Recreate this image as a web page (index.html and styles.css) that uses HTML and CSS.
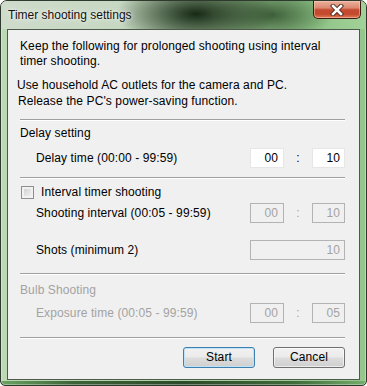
FILE: index.html
```html
<!DOCTYPE html>
<html>
	<head>
		<title>Timer shooting settings</title>
		<meta charset="UTF-8">
		<link rel="stylesheet" href="styles.css">
	</head>
	<body>
		<div class="window">
			<div class="titlebar">
				<span class="title">Timer shooting settings</span>
				<div class="closeBtn">
					<svg width="14" height="12" viewBox="0 0 14 12">
						<path d="M3 2 L11 10 M11 2 L3 10" stroke="#4a2418" stroke-width="4.4" stroke-linecap="square" fill="none"/>
						<path d="M3 2 L11 10 M11 2 L3 10" stroke="#ffffff" stroke-width="2.6" stroke-linecap="square" fill="none"/>
					</svg>
				</div>
			</div>
			<div class="client">
				<div class="note">Keep the following for prolonged shooting using interval<br>timer shooting.</div>
				<div class="note2">
					<div class="l1">Use household AC outlets for the camera and PC.</div>
					<div class="l2">Release the PC's power-saving function.</div>
				</div>
				<div class="sep sep1"></div>
				<div class="group groupDelay">Delay setting</div>
				<div class="row rowDelay">
					<span class="label">Delay time (00:00 - 99:59)</span>
					<div class="time">
						<div class="box boxMin">00</div><span class="colon">:</span><div class="box boxSec">10</div>
					</div>
				</div>
				<div class="sep sep2"></div>
				<div class="checkRow">
					<span class="checkbox"></span>
					<span>Interval timer shooting</span>
				</div>
				<div class="row rowInterval">
					<span class="label">Shooting interval (00:05 - 99:59)</span>
					<div class="time off">
						<div class="box boxMin">00</div><span class="colon">:</span><div class="box boxSec">10</div>
					</div>
				</div>
				<div class="row rowShots">
					<span class="label">Shots (minimum 2)</span>
					<div class="box boxWide off">10</div>
				</div>
				<div class="sep sep3"></div>
				<div class="group groupBulb disabled">Bulb Shooting</div>
				<div class="row rowExposure disabled">
					<span class="label">Exposure time (00:05 - 99:59)</span>
					<div class="time off">
						<div class="box boxMin">00</div><span class="colon">:</span><div class="box boxSec">05</div>
					</div>
				</div>
				<div class="sep sep4"></div>
				<div class="buttons">
					<div class="button buttonDefault">Start</div>
					<div class="button">Cancel</div>
				</div>
			</div>
		</div>
	</body>
</html>
```

FILE: styles.css
```css
body{
	margin: 0;
	font-family: "Liberation Sans", Arial, sans-serif;
	font-size: 12px;
	letter-spacing: 0.1px;
	color: #000;
	background-color: #ffffff;
}
.window{
	width: 367px;
	height: 386px;
	box-sizing: border-box;
	border: 1px solid #2e3a2d;
	border-radius: 7px 7px 5px 5px;
	padding: 0 6px 6px 6px;
	background:
		linear-gradient(to right, #6aa463 0%, #3c6338 20%, #2c4a29 50%, #3f6a3a 80%, #73ad6b 100%) bottom / 100% 4px no-repeat,
		linear-gradient(to right, #bcd8b5 0%, #b2d4ab 40%, #a0cc98 75%, #95c68c 100%);
	box-shadow: inset 0 0 0 1px rgba(255,255,255,0.35);
	overflow: hidden;
}
.titlebar{
	display: flex;
	justify-content: space-between;
	height: 28px;
	margin: 0 -6px;
	padding-left: 7px;
	background:
		radial-gradient(ellipse 80px 32px at 195px 13px, rgba(16,34,14,0.95), rgba(16,34,14,0)),
		radial-gradient(ellipse 60px 26px at 272px 14px, rgba(36,66,32,0.75), rgba(36,66,32,0)),
		linear-gradient(to right, #cfdbcb 0%, #c6d7c2 32%, #94b58d 60%, #8ec386 85%, #a2d199 100%);
}
.title{
	margin-top: 6px;
	line-height: 16px;
	letter-spacing: 0;
	color: #111;
	text-shadow: 0 0 6px rgba(255,255,255,0.9), 0 0 3px rgba(255,255,255,0.7);
}
.closeBtn{
	width: 46px;
	height: 17px;
	margin-right: 5px;
	border: 1px solid #3b1b12;
	border-top: none;
	border-radius: 0 0 5px 5px;
	background: linear-gradient(#eab09c 0%, #dc8a72 40%, #c54a30 52%, #c44a2e 78%, #e27d58 100%);
	box-shadow: inset 0 0 0 1px rgba(255,215,200,0.45);
	display: flex;
	align-items: center;
	justify-content: center;
}
.client{
	height: 351px;
	box-sizing: border-box;
	border: 1px solid #4b5a49;
	background-color: #f0f0f0;
	padding: 9px 14px 0 12px;
}
.note{
	line-height: 15px;
}
.note2{
	margin-top: 8px;
	line-height: 16px;
}
.note2 .l1{
	margin-left: -3px;
}
.note2 .l2{
	margin-left: -2px;
}
.sep{
	height: 0;
	border-top: 1px solid #a0a0a0;
	border-bottom: 1px solid #ffffff;
}
.sep1{ margin-top: 10px; }
.sep2{ margin-top: 9px; }
.sep3{ margin-top: 13px; }
.sep4{ margin-top: 14px; }
.group{
	line-height: 16px;
}
.groupDelay{ margin-top: 4px; }
.groupBulb{ margin-top: 7px; }
.disabled{
	color: #a3a3a3;
}
.row{
	display: flex;
	justify-content: space-between;
	align-items: center;
	height: 20px;
}
.row .label{
	padding-left: 16px;
}
.rowDelay{ margin-top: 7px; }
.rowInterval{ margin-top: 3px; }
.rowShots{ margin-top: 17px; }
.rowExposure{ margin-top: 5px; }
.checkRow{
	display: flex;
	align-items: center;
	height: 16px;
	margin-top: 5px;
	gap: 7px;
}
.checkbox{
	width: 11px;
	height: 11px;
	margin-left: 1px;
	border: 1px solid #8e8f8f;
	background: linear-gradient(135deg, #cbcbcb, #f7f7f7);
	box-shadow: inset 0 0 0 2px #f1f1f1;
}
.time{
	display: flex;
	align-items: center;
}
.box{
	height: 20px;
	box-sizing: border-box;
	border: 1px solid #e6e6e6;
	background-color: #ffffff;
	text-align: right;
	line-height: 18px;
	padding-right: 4px;
}
.boxMin{
	width: 34px;
	padding-right: 5px;
}
.boxSec{
	width: 33px;
}
.boxWide{
	width: 95px;
}
.colon{
	width: 28px;
	text-align: center;
}
.off .box, .box.off{
	background-color: #f0f0f0;
	border-color: #b3b3b3;
	color: #a3a3a3;
}
.off .colon{
	color: #a3a3a3;
}
.buttons{
	display: flex;
	justify-content: flex-end;
	gap: 18px;
	margin-top: 8px;
}
.button{
	width: 72px;
	height: 21px;
	box-sizing: border-box;
	border: 1px solid #707070;
	border-radius: 3px;
	background: linear-gradient(#f2f2f2 0%, #ebebeb 48%, #dddddd 52%, #cfcfcf 100%);
	box-shadow: inset 0 0 0 1px rgba(255,255,255,0.6);
	text-align: center;
	line-height: 19px;
}
.buttonDefault{
	border-color: #3c7fb1;
	box-shadow: inset 0 0 0 1px #bfe2f7;
}
```
